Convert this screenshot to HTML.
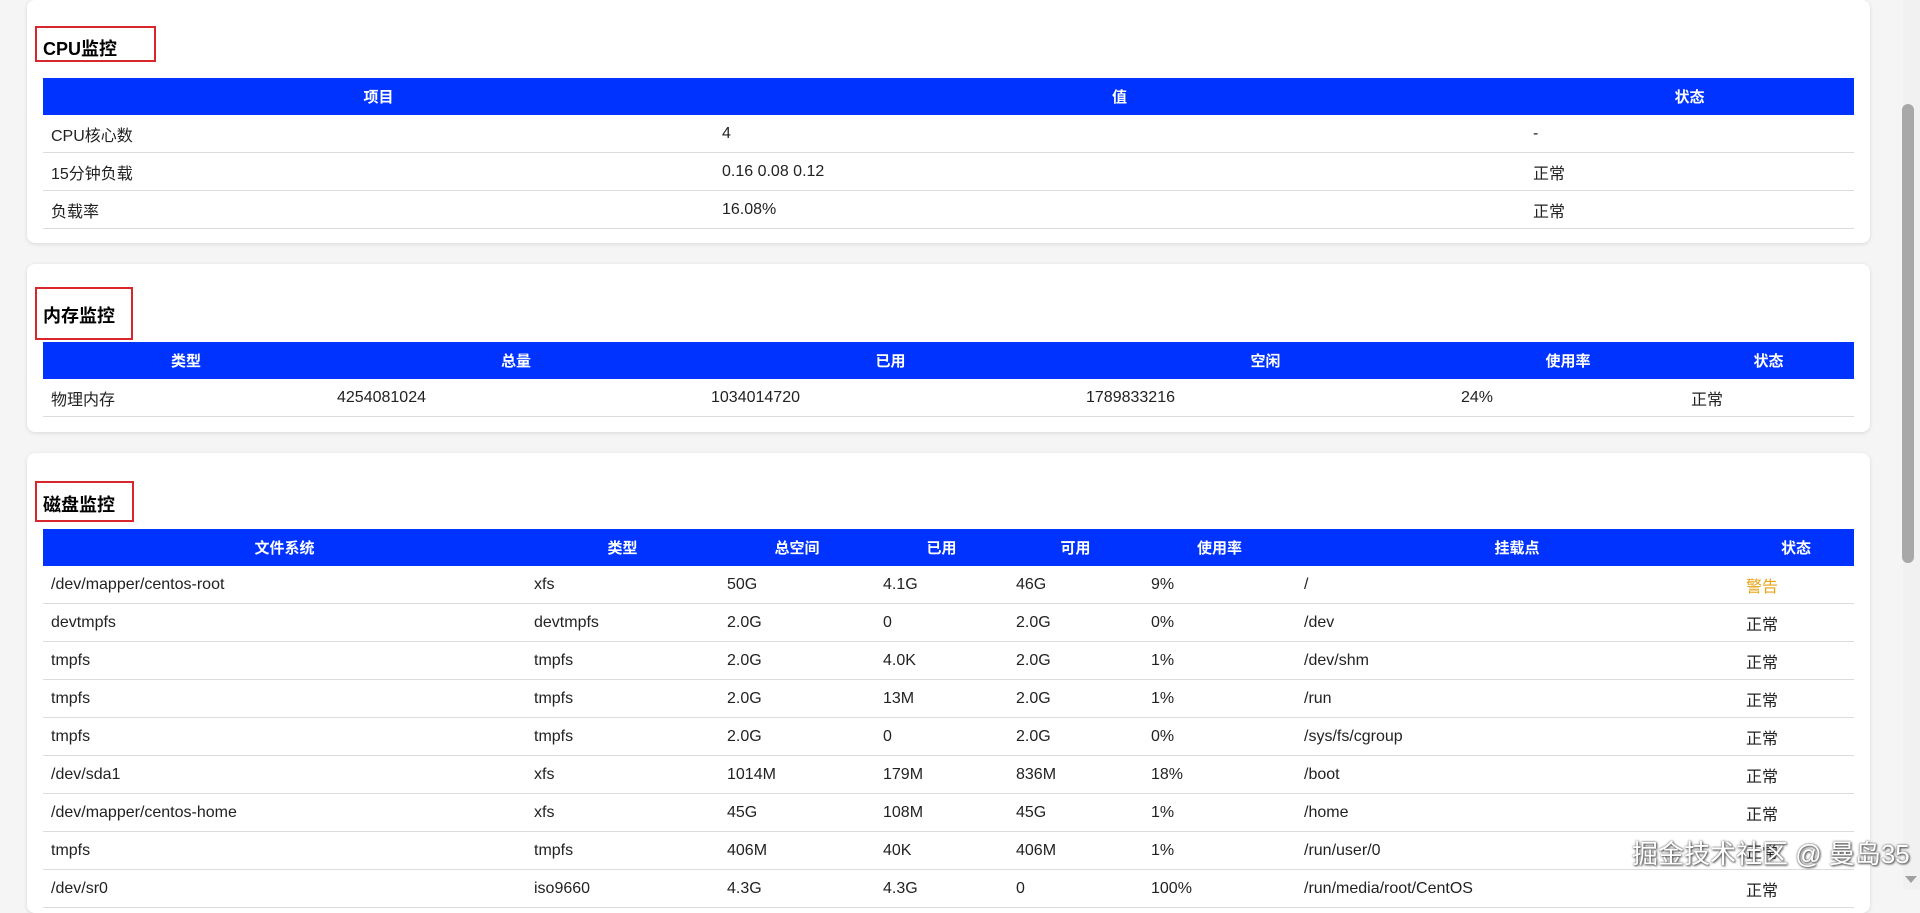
<!DOCTYPE html>
<html><head><meta charset="utf-8"><style>
html,body{margin:0;padding:0;}
body{width:1920px;height:890px;overflow:hidden;background:#f5f5f5;font-family:"Liberation Sans","Noto Sans CJK SC",sans-serif;color:#222;position:relative;}
.card{position:absolute;left:27px;width:1843px;background:#fff;border-radius:8px;box-shadow:0 1px 4px rgba(0,0,0,0.12);}
.title{position:absolute;left:8px;border:2px solid #d9262c;box-sizing:border-box;}
.title span{position:absolute;left:6px;font-weight:bold;font-size:18px;color:#000;white-space:nowrap;}
table{position:absolute;left:16px;width:1811px;border-collapse:collapse;table-layout:fixed;font-size:15px;}
th{background:#0033ff;color:#fff;font-weight:bold;height:37px;padding:0;text-align:center;}
td{height:37px;border-bottom:1px solid #dcdcdc;padding:0 0 0 8px;white-space:nowrap;overflow:hidden;font-size:16px;}
.warn{color:#e8a317;}
.sb{position:absolute;left:1903px;top:0;width:17px;height:890px;background:#f1f1f1;}
.thumb{position:absolute;left:1902px;top:104px;width:12px;height:459px;background:#a8a8a8;border-radius:6px;}
.wm{position:absolute;left:1632px;top:834px;font-size:26px;color:#fff;text-shadow:0 0 2px #555,1px 1px 2px #444;white-space:nowrap;}
</style></head><body>

<div class="card" style="top:0;height:243px;">
  <div class="title" style="top:26px;width:121px;height:36px;"><span style="top:7px;">CPU监控</span></div>
  <table style="top:78px;">
    <colgroup><col style="width:671px"><col style="width:811px"><col style="width:329px"></colgroup>
    <tr><th>项目</th><th>值</th><th>状态</th></tr>
    <tr><td>CPU核心数</td><td>4</td><td>-</td></tr>
    <tr><td>15分钟负载</td><td>0.16 0.08 0.12</td><td>正常</td></tr>
    <tr><td>负载率</td><td>16.08%</td><td>正常</td></tr>
  </table>
</div>

<div class="card" style="top:264px;height:168px;">
  <div class="title" style="top:23px;width:98px;height:53px;"><span style="top:13px;">内存监控</span></div>
  <table style="top:78px;">
    <colgroup><col style="width:286px"><col style="width:374px"><col style="width:375px"><col style="width:375px"><col style="width:230px"><col style="width:171px"></colgroup>
    <tr><th>类型</th><th>总量</th><th>已用</th><th>空闲</th><th>使用率</th><th>状态</th></tr>
    <tr><td>物理内存</td><td>4254081024</td><td>1034014720</td><td>1789833216</td><td>24%</td><td>正常</td></tr>
  </table>
</div>

<div class="card" style="top:453px;height:460px;">
  <div class="title" style="top:28px;width:99px;height:41px;"><span style="top:8px;">磁盘监控</span></div>
  <table style="top:76px;">
    <colgroup><col style="width:483px"><col style="width:193px"><col style="width:156px"><col style="width:133px"><col style="width:135px"><col style="width:153px"><col style="width:442px"><col style="width:116px"></colgroup>
    <tr><th>文件系统</th><th>类型</th><th>总空间</th><th>已用</th><th>可用</th><th>使用率</th><th>挂载点</th><th>状态</th></tr>
    <tr><td>/dev/mapper/centos-root</td><td>xfs</td><td>50G</td><td>4.1G</td><td>46G</td><td>9%</td><td>/</td><td class="warn">警告</td></tr>
    <tr><td>devtmpfs</td><td>devtmpfs</td><td>2.0G</td><td>0</td><td>2.0G</td><td>0%</td><td>/dev</td><td>正常</td></tr>
    <tr><td>tmpfs</td><td>tmpfs</td><td>2.0G</td><td>4.0K</td><td>2.0G</td><td>1%</td><td>/dev/shm</td><td>正常</td></tr>
    <tr><td>tmpfs</td><td>tmpfs</td><td>2.0G</td><td>13M</td><td>2.0G</td><td>1%</td><td>/run</td><td>正常</td></tr>
    <tr><td>tmpfs</td><td>tmpfs</td><td>2.0G</td><td>0</td><td>2.0G</td><td>0%</td><td>/sys/fs/cgroup</td><td>正常</td></tr>
    <tr><td>/dev/sda1</td><td>xfs</td><td>1014M</td><td>179M</td><td>836M</td><td>18%</td><td>/boot</td><td>正常</td></tr>
    <tr><td>/dev/mapper/centos-home</td><td>xfs</td><td>45G</td><td>108M</td><td>45G</td><td>1%</td><td>/home</td><td>正常</td></tr>
    <tr><td>tmpfs</td><td>tmpfs</td><td>406M</td><td>40K</td><td>406M</td><td>1%</td><td>/run/user/0</td><td>正常</td></tr>
    <tr><td>/dev/sr0</td><td>iso9660</td><td>4.3G</td><td>4.3G</td><td>0</td><td>100%</td><td>/run/media/root/CentOS</td><td>正常</td></tr>
  </table>
</div>

<div class="sb"></div>
<div class="thumb"></div>
<svg style="position:absolute;left:1904px;top:874px" width="14" height="10"><path d="M1 2 L13 2 L7 9 Z" fill="#a0a0a0"/></svg>
<div class="wm">掘金技术社区 @ 曼岛35</div>
</body></html>
